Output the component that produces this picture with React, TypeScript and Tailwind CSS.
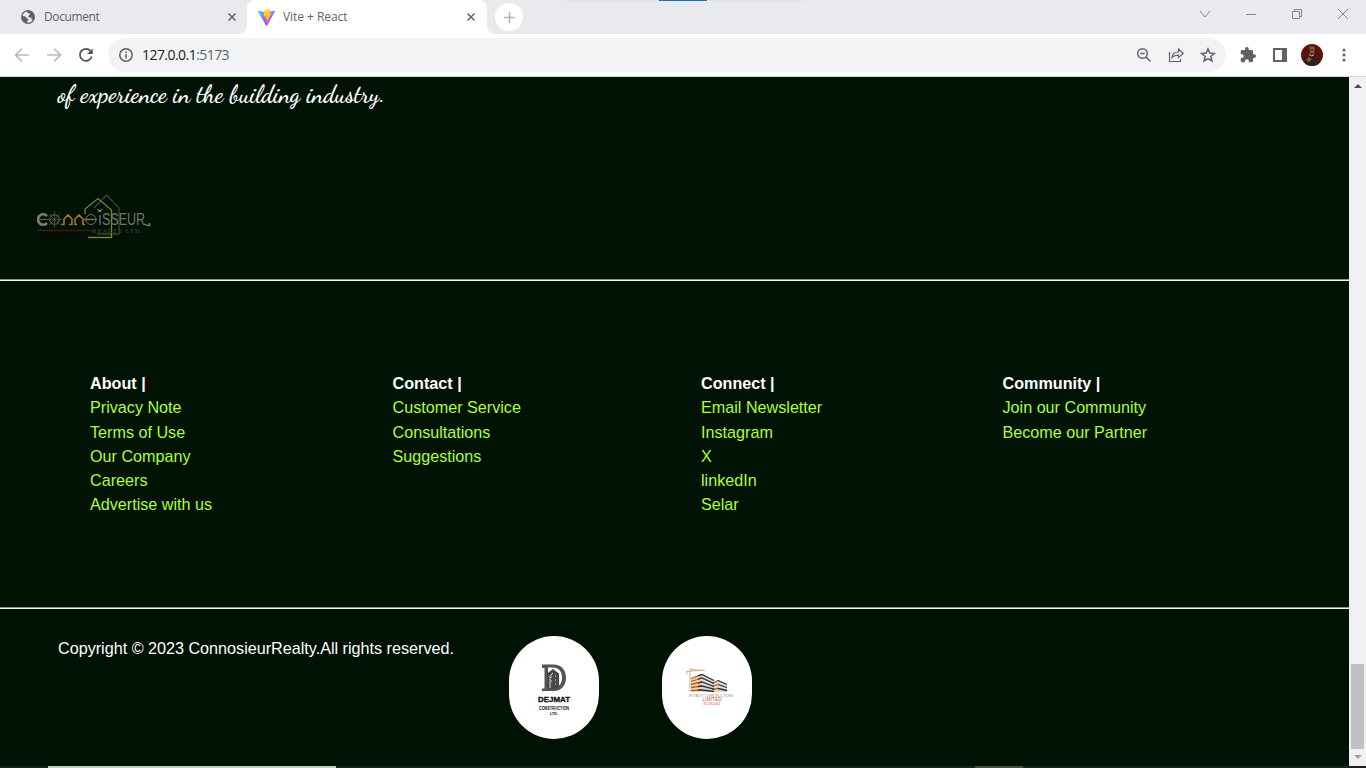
import React from "react";

const Globe = () => (
  <svg className="h-[14px] w-[14px] shrink-0" viewBox="0 0 24 24">
    <circle cx="12" cy="12" r="12" fill="#5f6368" />
    <path d="M10 2.600C6 3.500 3.300 6 2.800 10c2 1.500 3 .2 4.700 1.200 1.700 1 .6 2.500 2.500 2.800 2.500.4 3 1.200 2.500 3-.4 1.600-2.500 1.500-2.300 4.300 4.300.9 8.500-1.200 10.300-4.800-2.500.3-3-1.500-2.700-3.500-2.500 0-5.300.3-5.300-2.200 0-2 2-1.500 2.500-3.300.4-1.500-.8-2-2.500-2.200C10.500 5 11 3.500 10 2.600z" fill="#e8eaed" />
  </svg>
);

const Vite = () => (
  <svg className="h-[17px] w-[17px] shrink-0" viewBox="0 0 257 257">
    <defs>
      <linearGradient id="vite-a" x1="0" x2=".6" y1="0" y2=".8">
        <stop stopColor="#41d1ff" />
        <stop offset="1" stopColor="#bd34fe" />
      </linearGradient>
      <linearGradient id="vite-b" x1=".4" x2=".5" y1="0" y2="1">
        <stop stopColor="#ffea83" />
        <stop offset=".1" stopColor="#ffdd35" />
        <stop offset="1" stopColor="#ffa800" />
      </linearGradient>
    </defs>
    <path fill="url(#vite-a)" d="M255.153 37.938 134.897 252.976c-2.483 4.440-8.862 4.466-11.382.048L.875 37.958c-2.746-4.814 1.371-10.646 6.827-9.670l120.385 21.517a6.537 6.537 0 0 0 2.322-.004l117.867-21.483c5.438-.991 9.574 4.796 6.877 9.620Z" />
    <path fill="url(#vite-b)" d="M185.432.063 96.440 17.501a3.268 3.268 0 0 0-2.634 3.014l-5.474 92.456a3.268 3.268 0 0 0 3.997 3.378l24.777-5.718c2.318-.535 4.413 1.507 3.936 3.838l-7.361 36.047c-.495 2.426 1.782 4.500 4.151 3.780l15.304-4.649c2.372-.720 4.652 1.360 4.150 3.788l-11.698 56.621c-.732 3.542 3.979 5.473 5.943 2.437l1.313-2.028 72.516-144.720c1.215-2.423-.880-5.186-3.540-4.672l-25.505 4.922c-2.396.462-4.435-1.770-3.759-4.114l16.646-57.705c.677-2.350-1.370-4.583-3.769-4.113Z" />
  </svg>
);

const TabClose = () => (
  <svg className="h-2 w-2 shrink-0" viewBox="0 0 8 8" stroke="#5f6368" strokeWidth="1.500">
    <path d="M.5.5l7 7M7.500.5l-7 7" />
  </svg>
);

const TabStrip = () => (
  <div className="flex h-[34px] w-full shrink-0 bg-white">
    <div className="flex h-full w-[247px] items-center rounded-br-lg bg-[#e8eaed] pl-[21px] pr-[11px]">
      <Globe />
      <span className="ml-[9px] flex-1 text-[12px] tracking-[-0.4px] text-[#5f6368]">Document</span>
      <TabClose />
    </div>
    <div className="h-full w-[240px] bg-[#e8eaed]">
      <div className="flex h-full w-full items-center rounded-t-lg bg-white pl-[11px] pr-[12px]">
        <Vite />
        <span className="ml-[8px] flex-1 text-[12px] tracking-[-0.05px] text-[#5f6368]">Vite + React</span>
        <TabClose />
      </div>
    </div>
    <div className="flex h-full flex-1 rounded-bl-lg bg-[#e8eaed]">
      <div className="ml-[8px] mt-[3px] flex h-7 w-7 items-center justify-center rounded-full bg-white">
        <svg className="h-[11px] w-[11px]" viewBox="0 0 11 11" stroke="#b0b2b5" strokeWidth="1.500">
          <path d="M5.500 0v11M0 5.500h11" />
        </svg>
      </div>
      <div className="ml-[38px] flex h-px w-[244px] justify-center bg-[#dfe2e6]">
        <div className="h-px w-12 bg-[#1a6fb8]" />
      </div>
      <div className="ml-auto flex h-[28px] items-center pr-[17px]">
        <svg className="h-[12px] w-[150px]" viewBox="0 0 150 12" fill="none" stroke="#85878a">
          <path d="M1 3l5 6 5-6M47 6.500h10M93.500 3.500h7v7h-7zM95.500 3.500v-2h7v7h-2M139 1l10 10M149 1l-10 10" />
        </svg>
      </div>
    </div>
  </div>
);

const Avatar = () => (
  <svg className="ml-[14px] h-[22px] w-[22px]" viewBox="0 0 22 22">
    <defs>
      <clipPath id="face"><circle cx="11" cy="11" r="11" /></clipPath>
    </defs>
    <g clipPath="url(#face)">
      <path fill="#5c130d" d="M0 0h22v22H0z" />
      <path fill="#33201e" d="M3 22l1-8 4-3h6l5 5 1 6z" />
      <path fill="#8a5a44" d="M8.500 2.500h4.500l1 3-1.200 4.500-2 1.500-2-2zM5 16l3-3 2.500 2-2 3z" />
      <path fill="#41231c" d="M8.500 5.500h5v1h-5zM9 9h3.500v1.500H9z" />
      <path d="M8 10.500q3 3 5 0" fill="none" stroke="#d3b9a0" />
    </g>
  </svg>
);

const Toolbar = () => (
  <div className="flex h-[43px] w-full shrink-0 items-center border-b border-[#d8dbde] bg-white">
    <svg className="ml-[14px] h-4 w-[80px]" viewBox="0 0 80 16" fill="none" strokeWidth="1.700">
      <path stroke="#b8babd" d="M15 8H2M8 1.500L1.500 8 8 14.500M33 8h13M40 1.500L46.500 8 40 14.500" />
      <path stroke="#505458" strokeWidth="1.800" d="M76.500 4A6 6 0 1 0 77.700 9.500" />
      <path fill="#505458" d="M78.700 1.500V7H73z" />
    </svg>
    <div className="ml-[14px] flex h-[34px] w-[1118px] items-center rounded-full bg-[#f1f3f4] pl-[11px] pr-[10px]">
      <svg className="h-[14px] w-[14px]" viewBox="0 0 14 14" fill="none" stroke="#5f6368" strokeWidth="1.500">
        <circle cx="7" cy="7" r="6.200" />
        <path d="M7 6v4.500M7 3.500V5" />
      </svg>
      <span className="ml-[9px] flex-1 pb-px text-[14px] tracking-[-0.55px] text-[#202124]">
        127.0.0.1<span className="text-[#5f6368]">:5173</span>
      </span>
      <svg className="h-4 w-[80px]" viewBox="0 0 80 16" fill="none" stroke="#5f6368" strokeWidth="1.500">
        <circle cx="6.500" cy="6.500" r="4.800" />
        <path d="M10 10l4.500 4.500M4.300 6.500h4.400" />
        <path strokeWidth="1.200" d="M33.500 5v9.500h11V12M36 10.500c.4-4 3-5.500 6.500-5.500V2l4.700 4.500-4.700 4V8.200c-3 0-5 .5-6.500 2.300z" />
        <path d="M72 1.900l1.800 4.200 4.600.4-3.500 3 1 4.500L72 11.600 68.100 14l1-4.500-3.500-3 4.600-.4z" />
      </svg>
    </div>
    <svg className="ml-[14px] h-[16px] w-[16px]" viewBox="1 1 22 22" fill="#5f6368">
      <path d="M20.500 11H19V7a2 2 0 0 0-2-2h-4V3.500a2.500 2.500 0 0 0-5 0V5H4a2 2 0 0 0-2 2v3.800h1.500a2.700 2.700 0 0 1 0 5.400H2V20a2 2 0 0 0 2 2h3.800v-1.500a2.700 2.700 0 0 1 5.400 0V22H17a2 2 0 0 0 2-2v-4h1.500a2.500 2.500 0 0 0 0-5z" />
    </svg>
    <svg className="ml-[17px] h-[14px] w-[14px]" viewBox="0 0 14 14" fill="#5f6368">
      <path fillRule="evenodd" d="M0 0h14v14H0zM2 2v10h7V2z" />
    </svg>
    <Avatar />
    <svg className="ml-[19px] h-[14px] w-[4px]" viewBox="0 0 4 14" fill="#5f6368">
      <circle cx="2" cy="2" r="1.500" /><circle cx="2" cy="7" r="1.500" /><circle cx="2" cy="12" r="1.500" />
    </svg>
  </div>
);

const ConnoisseurLogo = () => (
  <svg className="ml-[37px] mt-[83px] block h-[52px] w-[120px] shrink-0" viewBox="0 -2 120 52" fill="none">
    <path d="M0 36h55v6H0z" fill="#090b06" />
    <path d="M0 36.500h56" stroke="#30230f" strokeWidth="1.500" />
    <path d="M57 14L69.500 1 82 14v26H60" stroke="#39423a" strokeWidth="1.300" />
    <path d="M48 20v-5L61 4.500 74.500 16v27.500H51" stroke="#788138" strokeWidth="1.300" />
    <path d="M10 22a5.200 5.200 0 1 0 0 7" stroke="#827b70" strokeWidth="2.600" />
    <path d="M1 25.500h11" stroke="#69665e" />
    <circle cx="17.500" cy="25.500" r="4.800" stroke="#77736b" />
    <path d="M10 25.500h15M17.500 17v17M12 20l11 11M23 20L12 31" stroke="#4b4d47" strokeWidth=".8" />
    <path d="M24 30.500h3V25l4-4 4 4v5.500h-3M40 30.500h-2V25l4-4 4 4v5.500h2" stroke="#a87324" strokeWidth="1.600" />
    <circle cx="54" cy="25.500" r="5" stroke="#706d65" />
    <path d="M47 25.500h13M63 21v10" stroke="#6e6b63" strokeWidth="1.400" />
    <path d="M61.500 18l4-3M60 15.500l4 2" stroke="#b29835" />
    <text x="65" y="31" fill="#77736b" fontFamily="Liberation Sans" fontSize="16" textLength="43" lengthAdjust="spacingAndGlyphs">SSEUR</text>
    <path d="M107 30q3 2 5.500 1.500V29" stroke="#817b71" strokeWidth="1.500" />
    <text x="55" y="39" fill="#353a2d" fontFamily="Liberation Serif" fontWeight="bold" fontSize="6.500" textLength="50">REALTY LTD.</text>
  </svg>
);

const columns = [
  { title: "About |", width: "w-[302.500px]", links: ["Privacy Note", "Terms of Use", "Our Company", "Careers", "Advertise with us"] },
  { title: "Contact |", width: "w-[308.500px]", links: ["Customer Service", "Consultations", "Suggestions"] },
  { title: "Connect |", width: "w-[301.500px]", links: ["Email Newsletter", "Instagram", "X", "linkedIn", "Selar"] },
  { title: "Community |", width: "w-[200px]", links: ["Join our Community", "Become our Partner"] },
];

const Dejmat = () => (
  <svg className="block h-[103px] w-[90px]" viewBox="0 0 90 103">
    <path fillRule="evenodd" d="M33 28.500h11.500c7.500 0 12.500 5 12.500 13.200S52 55 44.500 55H33v-2.500h2.500V32H33zM39 31.500v20h5c5.500 0 9-3.500 9-9.800 0-6.500-3.500-10.200-9-10.200z" fill="#555" />
    <path d="M38 52V37.500l6-4.500 6 4.500V52l-5 1z" fill="#484848" />
    <path d="M41 52V40l3-3M42 41h1M42 45h1M46 40h1M46 44h1M46 48h1" fill="none" stroke="#ddd" strokeWidth="1" />
    <g fontFamily="Liberation Sans" fontWeight="bold" textAnchor="middle" fill="#111">
      <text x="45" y="66" fontSize="8" stroke="#111" strokeWidth=".35" textLength="32" lengthAdjust="spacingAndGlyphs">DEJMAT</text>
      <text x="45" y="74" fontSize="4.500" textLength="30" lengthAdjust="spacingAndGlyphs">CONSTRUCTION</text>
      <text x="45" y="79.300" fontSize="4" textLength="8" lengthAdjust="spacingAndGlyphs">LTD.</text>
    </g>
  </svg>
);

const Royalty = () => (
  <svg className="block h-[103px] w-[90px]" viewBox="0 0 90 103" fill="none">
    <path d="M24 35.500l19-1.500M28 33v23M25 36v2M28 33l10 1.500" stroke="#c6a583" strokeWidth=".9" />
    <path d="M29 42l11-4v18H29zM50 47l6-3.500V56h-6z" fill="#f3d2b2" />
    <path d="M40 38l12 6v12H40zM56 43.500l9 4.500v8h-9z" fill="#d5d7d8" />
    <path d="M29 42.500L40 38.500M29 45.500L40 42M29 48.500L40 46M29 51.500L40 50M29 54.500L40 54M50 47.500l6-3M50 50.500l6-2M50 53.500l6-1" stroke="#a36435" strokeWidth="1.300" />
    <path d="M36 39.900l4-1.400 12 6M36 43.200l4-1.200 12 5.500M36 46.900l4-.9 12 4.500M36 50.500l4-.5 12 3.200M36 54h4l12 1.500M56 44.500l9 4M56 48.500l9 3M56 52.500l9 2" stroke="#373332" strokeWidth="1.300" />
    <g fontFamily="Liberation Sans" textAnchor="middle">
      <text x="49" y="60.800" fill="#a58860" fontSize="3.800" textLength="44" lengthAdjust="spacingAndGlyphs">ROYALTY CONSTRUCTIONS</text>
      <text x="50" y="65.300" fill="#b7503f" fontSize="4.500" textLength="19">LIMITED</text>
      <text x="50" y="69.300" fill="#d64949" fontSize="4" textLength="17" lengthAdjust="spacingAndGlyphs">RC1802447</text>
    </g>
  </svg>
);

const Divider = ({ className }: { className: string }) => (
  <hr className={`h-[2px] shrink-0 border-0 border-t border-[#8d968e] bg-[#f4f7f4] ${className}`} />
);

const Page = () => (
  <main className="flex h-full w-[1349px] flex-col overflow-hidden bg-[#001204] font-['Liberation_Sans',Arial,sans-serif] text-[16.160px] text-white">
    <svg className="ml-[57px] block h-[32px] w-[340px] shrink-0" viewBox="0 0 340 32">
      <text x="0.500" y="24.500" fill="white" fontFamily="Dancing Script, cursive" fontSize="24" fontWeight="600" textLength="327.500" lengthAdjust="spacingAndGlyphs">of experience in the building industry.</text>
    </svg>
    <ConnoisseurLogo />
    <Divider className="mt-[35px]" />
    <nav className="flex h-[326px] shrink-0 pl-[90px] pt-[90px]">
      {columns.map((column) => (
        <section key={column.title} className={`${column.width} shrink-0 leading-[24.250px]`}>
          <h2 className="font-bold">{column.title}</h2>
          <ul className="text-[#adff2f]">
            {column.links.map((link) => <li key={link}><a>{link}</a></li>)}
          </ul>
        </section>
      ))}
    </nav>
    <Divider className="" />
    <footer className="flex pl-[58px] pt-[27px]">
      <p className="w-[451px] leading-6">Copyright © 2023 ConnosieurRealty.All rights reserved.</p>
      <div className="flex gap-[63px]">
        <div className="h-[103px] w-[90px] rounded-[45px] bg-white"><Dejmat /></div>
        <div className="h-[103px] w-[90px] rounded-[45px] bg-white"><Royalty /></div>
      </div>
    </footer>
  </main>
);

const Scrollbar = () => (
  <div className="flex w-[17px] flex-col items-center bg-[#f1f1f1]">
    <svg className="mt-[7px] h-[4px] w-[8px]" viewBox="0 0 8 4"><path d="M0 4l4-4 4 4z" fill="#505050" /></svg>
    <div className="mt-auto h-[85px] w-[13px] bg-[#c1c1c1]" />
    <svg className="mb-[7px] mt-[6px] h-[4px] w-[8px]" viewBox="0 0 8 4"><path d="M0 0l4 4 4-4z" fill="#a3a3a3" /></svg>
  </div>
);

export default function App() {
  return (
    <div className="flex h-[768px] w-[1366px] flex-col overflow-hidden bg-white font-['Open_Sans','Noto_Sans',sans-serif]">
      <TabStrip />
      <Toolbar />
      <div className="flex h-[689px] shrink-0"><Page /><Scrollbar /></div>
      <div className="flex h-[2px] w-full shrink-0 bg-[#1c1f1c]">
        <div className="ml-12 h-full w-[288px] bg-[#c4cfc4]" />
        <div className="ml-[639px] h-full w-12 bg-[#454b45]" />
      </div>
    </div>
  );
}
